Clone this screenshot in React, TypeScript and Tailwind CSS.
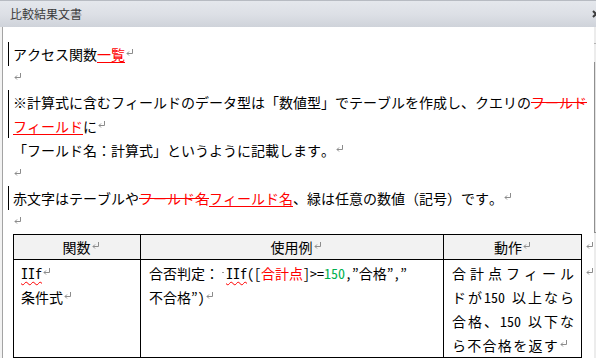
import React from "react";

const Ret = () => (
  <svg width="8" height="7" viewBox="0 0 8 7" className="inline-block align-[4px] ml-px">
    <path d="M6.5 0V4.5H1" stroke="#8c8c8c" strokeWidth="1" fill="none" />
    <path d="M3 2.5L1 4.5L3 6.5" stroke="#8c8c8c" strokeWidth="1" fill="none" />
  </svg>
);

const Para = ({ bar, children }: { bar?: boolean; children: React.ReactNode }) => (
  <div className="flex">
    <div className={bar ? "w-[6px] shrink-0 border-r border-black" : "w-[6px] shrink-0 border-r border-transparent"} />
    <div className="pl-[4px] whitespace-nowrap">{children}</div>
  </div>
);

const Red = ({ children }: { children: React.ReactNode }) => (
  <span className="text-[#ff0000] underline decoration-[#ff0000] underline-offset-2">{children}</span>
);
const Strike = ({ children }: { children: React.ReactNode }) => (
  <span className="text-[#ff0000] line-through decoration-[#ff0000]">{children}</span>
);
const Wavy = ({ children }: { children: React.ReactNode }) => (
  <span className="underline decoration-wavy decoration-[#ff0000] decoration-1 underline-offset-2">{children}</span>
);

export default function App() {
  return (
    <div className="w-[596px] h-[358px] overflow-hidden bg-white flex flex-col font-['Noto_Sans_Mono_CJK_JP','Noto_Sans_CJK_JP',sans-serif] text-[14px] leading-[24px] text-black">
      {/* title bar */}
      <div className="h-[27px] shrink-0 border-t border-[#b7bbc2] bg-[linear-gradient(#e4e7ec,#dde0e6_50%,#cfd3da)] flex items-center">
        <span className="pl-[10px] text-[12px] leading-[12px] text-[#3a3a3a] font-['Noto_Sans_CJK_JP',sans-serif]">比較結果文書</span>
        <div className="ml-auto w-[4px] overflow-hidden flex">
          <svg width="8" height="8" viewBox="0 0 8 8" className="shrink-0">
            <path d="M1 1L7 7M7 1L1 7" stroke="#3c3c3c" strokeWidth="2" />
          </svg>
        </div>
      </div>

      <div className="flex flex-1 min-h-0">
        <div className="w-[2px] shrink-0 bg-[#f2f2f2]" />
        <div className="w-px shrink-0 bg-[#a3a3a3]" />

        {/* document */}
        <div className="flex-1 min-w-0 pt-[15px] flex flex-col">
          <Para bar>
            アクセス関数<Red>一覧</Red>
            <Ret />
          </Para>
          <Para>
            <Ret />
          </Para>
          <Para bar>
            <div>
              ※計算式に含むフィールドのデータ型は「数値型」でテーブルを作成し、クエリの<Strike>フールド</Strike>
            </div>
            <div>
              <Red>フィールド</Red>に<Ret />
            </div>
          </Para>
          <Para>
            「フールド名：計算式」というように記載します。<Ret />
          </Para>
          <Para>
            <Ret />
          </Para>
          <Para bar>
            赤文字はテーブルや<Strike>フールド名</Strike>
            <Red>フィールド名</Red>、緑は任意の数値（記号）です。<Ret />
          </Para>
          <Para>
            <Ret />
          </Para>

          {/* table */}
          <div className="ml-[10px] flex flex-col">
            <div className="flex">
              <div className="grid grid-cols-[127px_303px_138px] border-l border-t border-black bg-[#f2f2f2]">
                <div className="border-r border-b border-black h-[25px] text-center pl-[8px]">
                  関数<Ret />
                </div>
                <div className="border-r border-b border-black h-[25px] text-center pl-[8px]">
                  使用例<Ret />
                </div>
                <div className="border-r border-b border-black h-[25px] text-center">
                  動作<Ret />
                </div>
              </div>
              <div className="pl-[3px] pt-px">
                <Ret />
              </div>
            </div>

            <div className="flex">
              <div className="grid grid-cols-[127px_303px_138px] border-l border-black">
                <div className="border-r border-b border-black pt-px px-[7px]">
                  <div>
                    <Wavy>IIf</Wavy>
                    <Ret />
                  </div>
                  <div>
                    条件式<Ret />
                  </div>
                </div>
                <div className="border-r border-b border-black pt-px px-[8px] whitespace-nowrap">
                  <div>
                    合否判定：
                    <span className="inline-flex w-[7px] justify-center align-[6px]">
                      <span className="w-[2px] h-px bg-[#9a9a9a]" />
                    </span>
                    <Wavy>IIf</Wavy>([<span className="text-[#ff0000]">合計点</span>]&gt;=
                    <span className="text-[#00b050]">150</span>,”合格”,”
                  </div>
                  <div>
                    不合格”)<Ret />
                  </div>
                </div>
                <div className="border-r border-b border-black pt-px pl-[8px] pr-[7px]">
                  <div className="text-justify [text-align-last:justify]">合計点フィール</div>
                  <div className="text-justify [text-align-last:justify]">
                    ドが<span className="inline-block pr-[5px]">150</span>以上なら
                  </div>
                  <div className="text-justify [text-align-last:justify]">
                    合格、<span className="inline-block pr-[5px]">150</span>以下な
                  </div>
                  <div className="text-justify [text-align-last:justify] pr-[6px]">
                    ら不合格を返す<Ret />
                  </div>
                </div>
              </div>
              <div className="pl-[3px] pt-px">
                <Ret />
              </div>
            </div>

            <div className="flex">
              <div className="grid grid-cols-[127px_303px_138px] border-l border-black">
                <div className="border-r border-b border-black h-[40px]" />
                <div className="border-r border-b border-black h-[40px]" />
                <div className="border-r border-b border-black h-[40px]" />
              </div>
            </div>
          </div>
        </div>

        {/* scrollbar edge */}
        <div className="w-[2px] shrink-0 bg-[#ececec] flex flex-col">
          <div className="h-[17px] border-b border-[#b3b3b3]" />
          <div className="h-[18px]" />
          <div className="h-[171px] border-l border-b border-[#8f8f8f] bg-[#e3e3e3]" />
        </div>
      </div>
    </div>
  );
}
